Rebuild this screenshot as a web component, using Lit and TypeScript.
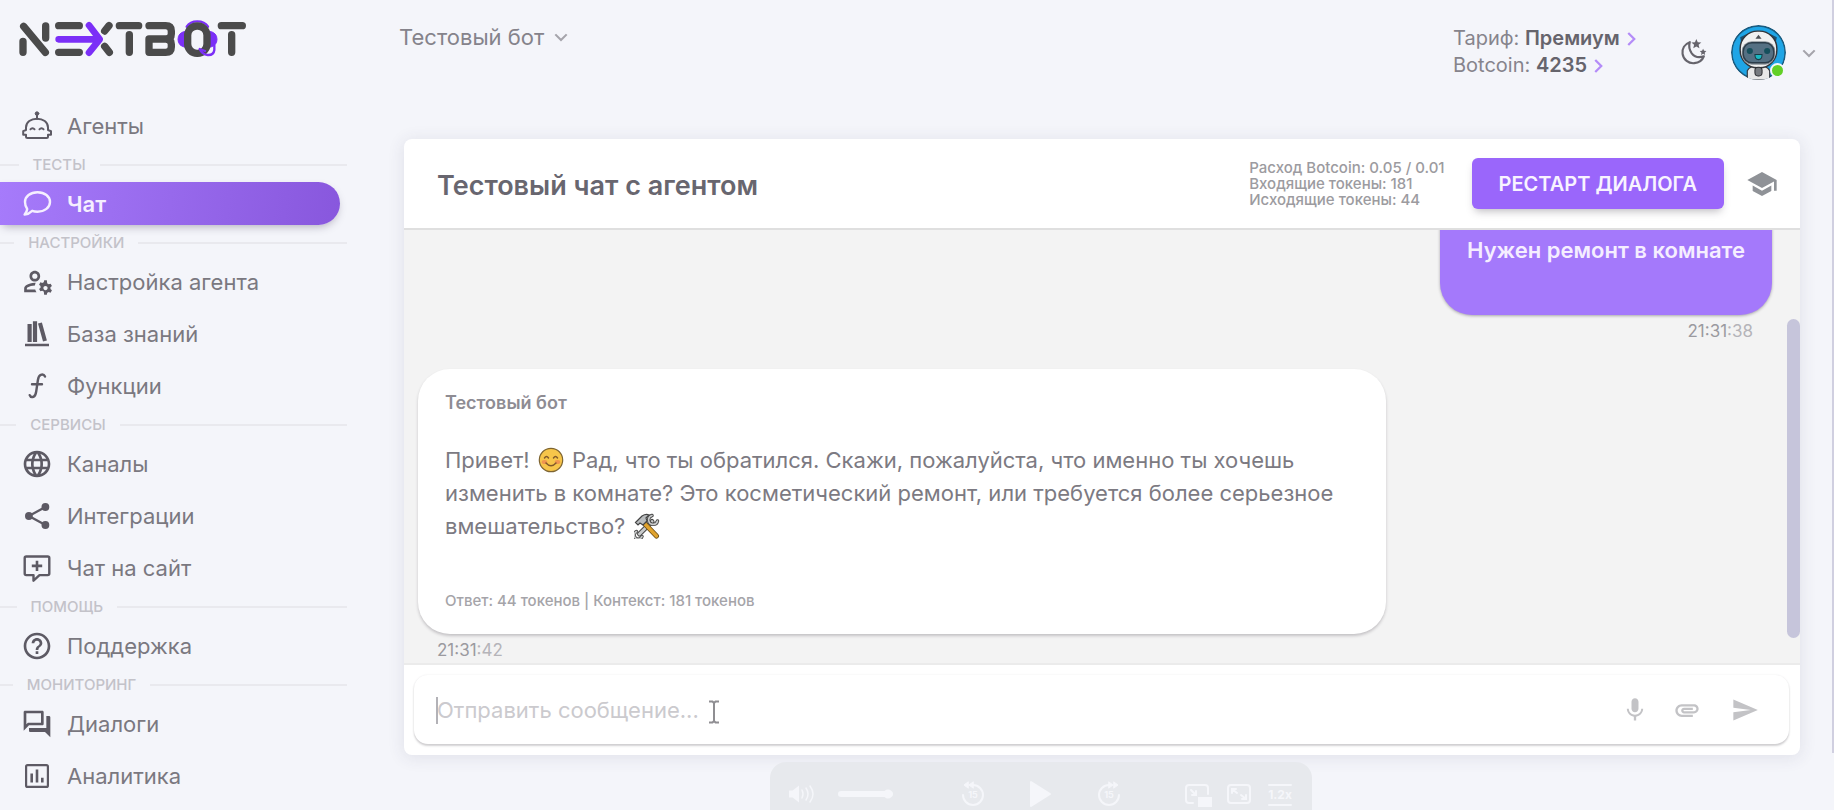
import { LitElement, html, svg, css } from "lit";
import { customElement, property } from "lit/decorators.js";

const m = (d: string) => svg`<path transform="scale(1.3333)" fill="currentColor" d=${d}></path>`;

const ICONS: Record<string, unknown> = {
  agents: svg`<g fill="none" stroke="currentColor" stroke-width="2" stroke-linejoin="round" stroke-linecap="round">
    <circle cx="16" cy="3.6" r="1.8" fill="currentColor" stroke-width="1"></circle>
    <path d="M16 4v5"></path>
    <path d="M5 20v-2.5C5 12 10 8.7 16 8.7s11 3.3 11 8.8V20l3 1.2v3.6h-3v1.7a1.5 1.5 0 0 1-1.5 1.5h-19A1.5 1.5 0 0 1 5 26.500v-1.7H2.200v-3.6z"></path>
    <path d="M9.500 19.300c1-1.500 3-1.500 4 0M18.500 19.300c1-1.500 3-1.500 4 0"></path></g>`,
  chat: svg`<path fill="none" stroke="currentColor" stroke-width="2.400" stroke-linejoin="round" d="M16.500 4.200C23.700 4.200 29 8.500 29 14s-5.300 9.700-12.500 9.700c-1.900 0-3.700-.3-5.300-.9C9.300 24.600 6.800 26.400 3.600 26.600c1.500-1.600 2.400-3.700 2.600-5.600C4.700 19.100 4 16.700 4 14c0-5.500 5.300-9.800 12.500-9.800z"></path>`,
  account: svg`<g transform="translate(.5 -.5)">${m("M4 18v-.65c0-.34.16-.66.41-.81C6.1 15.53 8.030 15 10 15c.03 0 .05 0 .08.010.1-.7.3-1.370.59-1.980-.22-.02-.44-.03-.67-.03-2.420 0-4.680.67-6.610 1.820-.88.52-1.390 1.500-1.390 2.530V20h9.260c-.42-.6-.75-1.280-.97-2H4zM10 12c2.210 0 4-1.790 4-4s-1.790-4-4-4-4 1.790-4 4 1.790 4 4 4zm0-6c1.100 0 2 .9 2 2s-.9 2-2 2-2-.9-2-2 .9-2 2-2zM21.750 17c0-.22-.03-.42-.06-.63l1.140-1.010-1-1.730-1.450.49c-.32-.27-.68-.48-1.080-.63L19 11h-2l-.3 1.490c-.4.15-.76.36-1.080.63l-1.450-.49-1 1.730 1.140 1.010c-.03.21-.06.41-.06.63s.03.42.06.63l-1.140 1.010 1 1.730 1.450-.49c.32.27.68.48 1.080.63L17 22h2l.3-1.490c.4-.15.76-.36 1.080-.63l1.450.49 1-1.730-1.140-1.010c.03-.21.06-.41.06-.63zM18 18.500c-.9 0-1.600-.7-1.600-1.600s.7-1.600 1.600-1.600 1.600.7 1.600 1.600-.7 1.600-1.600 1.600z")}</g>`,
  books: svg`<g fill="currentColor"><path d="M6.500 6h4.200v18H6.500zM11.900 3.300h4.200V24h-4.200zM17 5.600l3.900-1 5 17.900-3.900 1.100zM4 25.800h24v2.400H4z"></path></g>`,
  fn: svg`<path fill="none" stroke="currentColor" stroke-width="2.400" stroke-linecap="round" d="M24 6.600c-.8-1.700-2.600-2.300-4.200-1.700-2 .7-2.500 2.700-2.900 5.100l-1.700 11.500c-.4 2.700-1 4.600-2.800 5.300-1.600.5-3.200-.1-3.700-1.600M11 14.200h10"></path>`,
  globe: m("M11.990 2C6.470 2 2 6.480 2 12s4.470 10 9.990 10C17.520 22 22 17.520 22 12S17.520 2 11.990 2zm6.930 6h-2.950c-.32-1.250-.78-2.450-1.380-3.560 1.840.63 3.370 1.910 4.330 3.560zM12 4.040c.83 1.200 1.480 2.530 1.910 3.960h-3.820c.43-1.430 1.080-2.760 1.910-3.960zM4.260 14C4.100 13.360 4 12.690 4 12s.1-1.360.26-2h3.380c-.08.66-.14 1.320-.14 2 0 .68.06 1.340.14 2H4.260zm.82 2h2.950c.32 1.250.78 2.450 1.380 3.560-1.840-.63-3.370-1.900-4.330-3.560zm2.950-8H5.080c.96-1.660 2.490-2.930 4.330-3.560C8.810 5.550 8.350 6.750 8.030 8zM12 19.960c-.83-1.200-1.480-2.530-1.910-3.960h3.820c-.43 1.430-1.080 2.760-1.910 3.960zM14.340 14H9.660c-.09-.66-.16-1.320-.16-2 0-.68.07-1.350.16-2h4.680c.09.65.16 1.320.16 2 0 .68-.07 1.340-.16 2zm.25 5.560c.6-1.110 1.060-2.310 1.380-3.560h2.950c-.96 1.650-2.490 2.930-4.330 3.560zM16.360 14c.08-.66.14-1.320.14-2 0-.68-.06-1.340-.14-2h3.380c.16.64.26 1.310.26 2s-.1 1.360-.26 2h-3.380z"),
  share: svg`<g fill="currentColor"><circle cx="24.400" cy="7" r="3.900"></circle><circle cx="7.900" cy="16" r="3.900"></circle><circle cx="24.400" cy="25" r="3.900"></circle><path fill="none" stroke="currentColor" stroke-width="2.300" d="M24.400 7 7.900 16l16.500 9"></path></g>`,
  widget: svg`<g fill="none" stroke="currentColor" stroke-width="2.400" stroke-linejoin="round"><path d="M5.300 4.500h21.400c.9 0 1.600.7 1.600 1.600v15.400c0 .9-.7 1.600-1.600 1.600h-8.200l-6 5.600v-5.600H5.300c-.9 0-1.600-.7-1.600-1.600V6.100c0-.9.7-1.600 1.600-1.600z"></path><path d="M16 8.700v10.400M10.800 13.900h10.400" stroke-width="2.600"></path></g>`,
  help: m("M11 18h2v-2h-2v2zm1-16C6.480 2 2 6.480 2 12s4.480 10 10 10 10-4.480 10-10S17.520 2 12 2zm0 18c-4.410 0-8-3.590-8-8s3.590-8 8-8 8 3.590 8 8-3.590 8-8 8zm0-14c-2.210 0-4 1.790-4 4h2c0-1.100.9-2 2-2s2 .9 2 2c0 2-3 1.750-3 5h2c0-2.250 3-2.500 3-5 0-2.210-1.790-4-4-4z"),
  dialogs: m("M15 4v7H5.170L4 12.170V4h11m1-2H3c-.55 0-1 .45-1 1v14l4-4h10c.55 0 1-.45 1-1V3c0-.55-.45-1-1-1zm5 4h-2v9H6v2c0 .55.45 1 1 1h11l4 4V7c0-.55-.45-1-1-1z"),
  stats: svg`<g fill="none" stroke="currentColor" stroke-width="2.200"><rect x="5.100" y="5.100" width="21.800" height="21.800" rx="1.500"></rect><path stroke-width="2.600" d="M10.700 13.500v9M16 9.500v13M21.300 17.800v4.700"></path></g>`,
  school: m("M5 13.180v4L12 21l7-3.820v-4L12 17l-7-3.820zM12 3L1 9l11 6 9-4.910V17h2V9L12 3z"),
  mic: m("M12 14c1.660 0 2.990-1.340 2.990-3L15 5c0-1.660-1.340-3-3-3S9 3.340 9 5v6c0 1.660 1.340 3 3 3zm5.300-3c0 3-2.540 5.100-5.300 5.100S6.700 14 6.700 11H5c0 3.410 2.720 6.230 6 6.720V21h2v-3.280c3.280-.48 6-3.300 6-6.720h-1.700z"),
  clip: m("M2 12.500C2 9.460 4.460 7 7.500 7H18c2.210 0 4 1.790 4 4s-1.790 4-4 4H9.500C8.120 15 7 13.880 7 12.500S8.120 10 9.500 10H17v2H9.410c-.55 0-.55 1 0 1H18c1.100 0 2-.9 2-2s-.9-2-2-2H7.500C5.570 9 4 10.570 4 12.500S5.570 16 7.500 16H17v2H7.500C4.460 18 2 15.540 2 12.500z"),
  send: m("M2.010 21L23 12 2.010 3 2 10l15 2-15 2z"),
  moon: svg`<path fill="none" stroke="currentColor" stroke-width="2.300" stroke-linejoin="round" d="M11.500 5.500C6 7.500 3 12.500 3.800 18c.9 6.300 6.400 10.500 12.500 9.900 4.600-.4 8.600-3.200 10.200-7.300-5.500 2-10.200.3-12.900-3.200-2.700-3.700-3.400-7.500-2.100-11.900z"></path>
    <path fill="currentColor" d="m18.500 2 1.500 3.500 3.800.3-2.900 2.500.9 3.700-3.300-2-3.300 2 .9-3.700-2.900-2.500 3.800-.3zM25.700 12.500l1.100 2.200 2.400.3-1.800 1.700.5 2.400-2.200-1.200-2.200 1.200.5-2.400-1.800-1.700 2.400-.3z"></path>`,
  down: svg`<path fill="none" stroke="currentColor" stroke-width="2.400" d="m9.500 13 6.500 6.500 6.500-6.500"></path>`,
  right: svg`<path fill="none" stroke="currentColor" stroke-width="3" d="m11 8 8 8-8 8"></path>`,
};

@customElement("ui-icon")
export class UiIcon extends LitElement {
  @property() name = "";
  static styles = css`
    :host { display: inline-flex; flex: none; width: 32px; height: 32px; }
    .glyph { width: 100%; height: 100%; display: block; }
  `;
  render() {
    return html`<svg class="glyph" viewBox="0 0 32 32" aria-hidden="true">${ICONS[this.name]}</svg>`;
  }
}

type Entry = { icon: string; label: string; active?: boolean } | { section: string };

const NAV: Entry[] = [
  { icon: "agents", label: "Агенты" },
  { section: "ТЕСТЫ" },
  { icon: "chat", label: "Чат", active: true },
  { section: "НАСТРОЙКИ" },
  { icon: "account", label: "Настройка агента" },
  { icon: "books", label: "База знаний" },
  { icon: "fn", label: "Функции" },
  { section: "СЕРВИСЫ" },
  { icon: "globe", label: "Каналы" },
  { icon: "share", label: "Интеграции" },
  { icon: "widget", label: "Чат на сайт" },
  { section: "ПОМОЩЬ" },
  { icon: "help", label: "Поддержка" },
  { section: "МОНИТОРИНГ" },
  { icon: "dialogs", label: "Диалоги" },
  { icon: "stats", label: "Аналитика" },
];

@customElement("side-nav")
export class SideNav extends LitElement {
  static styles = css`
    :host { display: block; width: 347px; flex: none; }
    .logo { display: block; width: 228px; height: 38px; margin: 19px 0 47px 19px; }
    .list { display: flex; flex-direction: column; gap: 9px; }
    .item {
      display: flex; align-items: center; gap: 14px; height: 43px; margin-right: 7px;
      padding-left: 21px; color: #7a7880; font-size: 22px; text-decoration: none;
      border-radius: 0 22px 22px 0;
    }
    .item ui-icon { color: #5d5a64; }
    .active {
      color: #f5efff; font-weight: 600;
      background: linear-gradient(98deg, #a67bfb, #8857dd);
      box-shadow: 0 4px 10px -3px rgba(60, 50, 80, 0.4);
    }
    .active ui-icon { color: #f5efff; }
    .section {
      display: flex; align-items: center; gap: 14px; height: 17px; margin-left: -9px;
      color: #c3c2c9; font-size: 15px; line-height: 17px; font-weight: 500;
    }
    .section::before, .section::after { content: ""; height: 2px; background: #e9e9ee; }
    .section::before { flex: 1; }
    .section::after { flex: 9; }
  `;
  render() {
    return html`
      <svg class="logo" viewBox="57 55 684 114" role="img" aria-label="NEXTBOT">
        <g fill="none" stroke-linecap="round" stroke-linejoin="round" stroke-width="22" stroke="#4b4b4b">
          <path d="M69 122v33M71 77l65 78M137 76v36M176 75h62M176 155h62M327 75l-13 16M314 137l14 18M358 75h58M388 102v53M664 75h63M695 102v53"></path>
          <path d="M447 75h50q17 0 17 16v8q0 16-17 16h-50v40h50q17 0 17-16v-8q0-16-17-16"></path>
          <g stroke="#7b2ff7" fill="#7b2ff7" stroke-width="3">
            <path d="M556 92q-22 4-22 24t22 24zM629 92q22 4 22 24t-22 24z"></path>
            <path fill="none" stroke-width="7" d="M560 78q10-16 32-16t32 16"></path>
          </g>
          <rect x="563" y="76" width="58" height="82" rx="28"></rect>
          <path stroke="#7b2ff7" stroke-width="7" d="M643 134v14q-2 16-20 15-16-1-24-18l16 6"></path>
          <path stroke="#7b2ff7" stroke-width="20" d="M176 116h120M267 74l32 42-32 40"></path>
        </g>
      </svg>
      <nav class="list">
        ${NAV.map((e) =>
          "section" in e
            ? html`<div class="section">${e.section}</div>`
            : html`<a class="item ${e.active ? "active" : ""}" href="#"><ui-icon name=${e.icon}></ui-icon>${e.label}</a>`,
        )}
      </nav>
    `;
  }
}

@customElement("top-bar")
export class TopBar extends LitElement {
  static styles = css`
    :host { display: flex; align-items: flex-start; height: 139px; padding-right: 16px; box-sizing: border-box; }
    button { border: 0; padding: 0; background: none; font: inherit; color: inherit; display: flex; align-items: center; }
    .bot { margin: 21px auto 0 -5px; height: 32px; gap: 3px; font-size: 22px; color: #85838b; }
    .chev { width: 28px; height: 28px; color: #a5a4ab; }
    .plan { margin-top: 25px; font-size: 20px; line-height: 27px; color: #86848c; width: 190px; }
    .row { display: flex; align-items: center; white-space: pre; }
    .row b { font-weight: 600; color: #66646c; }
    .row a { display: flex; color: #b48cf8; }
    .arrow { width: 24px; height: 24px; }
    .theme { margin: 36px 22px 0 36px; color: #66646c; }
    .theme ui-icon { width: 30px; height: 32px; }
    .user { margin-top: 25px; gap: 9px; }
    .face { position: relative; display: block; width: 55px; height: 55px; }
    .pic { display: block; width: 55px; height: 55px; }
    .dot {
      position: absolute; right: 1px; bottom: 2px; width: 11px; height: 11px;
      border-radius: 50%; background: #62d026; border: 2px solid #f4f5fa;
    }
    .user ui-icon { width: 28px; height: 28px; color: #a5a4ab; margin-right: -5px; }
  `;
  render() {
    return html`
      <button class="bot">Тестовый бот<ui-icon class="chev" name="down"></ui-icon></button>
      <div class="plan">
        <div class="row">Тариф: <b>Премиум</b><a href="#" aria-label="Тариф"><ui-icon class="arrow" name="right"></ui-icon></a></div>
        <div class="row">Botcoin: <b>4235</b><a href="#" aria-label="Botcoin"><ui-icon class="arrow" name="right"></ui-icon></a></div>
      </div>
      <button class="theme" aria-label="Тема"><ui-icon name="moon"></ui-icon></button>
      <button class="user" aria-label="Профиль">
        <span class="face">
          <svg class="pic" viewBox="0 0 54 54" aria-hidden="true">
            <defs><clipPath id="c"><circle cx="27" cy="27" r="27"></circle></clipPath></defs>
            <g clip-path="url(#c)">
              <circle cx="27" cy="27" r="26.200" fill="#1fa5e6" stroke="#1b5c80" stroke-width="1.600"></circle>
              <path d="M16 54V45q2-5 11-5t11 5v9z" fill="#e8e8e8" stroke="#3a3d42" stroke-width="1.200"></path>
              <path d="M10 17l-1-5 6-3 24 0 6 3-1 5z" fill="#1b4f70"></path>
              <rect x="9" y="6" width="36" height="36" rx="17" fill="#f0f0f0" stroke="#33363b" stroke-width="1.400"></rect>
              <path d="M24 13.500l3-4 3 4z" fill="#4c4f55"></path>
              <rect x="10.500" y="16" width="33" height="23" rx="10" fill="#8d949b"></rect>
              <rect x="12" y="17.500" width="30" height="19.500" rx="8.500" fill="#557083" stroke="#2c3d4a" stroke-width="1.400"></rect>
              <circle cx="18.500" cy="25.500" r="3" fill="#164f5c"></circle><circle cx="35.500" cy="25.500" r="3" fill="#164f5c"></circle>
              <path d="M23.500 29h7q0 5-3.500 5t-3.500-5z" fill="#19b7c0" stroke="#173d48"></path>
              <rect x="23.500" y="41.500" width="7" height="8.500" rx="3" fill="#777b80" stroke="#2d2f33"></rect>
            </g>
          </svg>
          <span class="dot"></span>
        </span>
        <ui-icon name="down"></ui-icon>
      </button>
    `;
  }
}

@customElement("chat-card")
export class ChatCard extends LitElement {
  static styles = css`
    :host {
      display: flex; flex-direction: column; flex: 1; min-height: 0; background: #fff;
      border-radius: 8px; overflow: hidden; box-shadow: 0 2px 16px 2px rgba(58, 53, 85, 0.09);
    }
    button { border: 0; padding: 0; background: none; font: inherit; color: inherit; display: flex; }
    .head {
      display: flex; align-items: center; height: 89px; padding: 0 22px 0 33px;
      border-bottom: 2px solid #dfdfdf; flex: none;
    }
    .title { margin: 4px auto 0 0; font-size: 27px; font-weight: 600; color: #68666f; }
    .usage { font-size: 15px; line-height: 16px; font-weight: 500; color: #9c9ba0; margin-right: 27px; }
    .usage div { white-space: nowrap; }
    .head .restart {
      height: 51px; padding: 0 27px; align-items: center; border-radius: 6px; background: #9a66fb;
      color: #f8f3ff; font-size: 20px; font-weight: 600; margin-right: 22px;
      box-shadow: 0 5px 9px -3px rgba(58, 53, 65, 0.35);
    }
    .school { color: #8f9297; }
    .feed {
      position: relative; flex: 1; min-height: 0; overflow: hidden; background: #f3f3f3;
      display: flex; flex-direction: column; justify-content: flex-end;
      padding: 0 28px 0 14px; border-bottom: 2px solid #ebebeb;
    }
    .msg { display: flex; flex-direction: column; flex: none; }
    .mine { align-items: flex-end; margin-bottom: 25px; }
    .bot { align-items: flex-start; }
    .bubble { box-sizing: border-box; border-radius: 32px; padding: 22px 27px; font-size: 22px; line-height: 33px; }
    .mine .bubble { background: #a479fb; color: #f5eeff; font-weight: 600; padding-top: 48px; padding-bottom: 48px; box-shadow: 0 1px 3px rgba(58, 53, 65, 0.4); }
    .bot .bubble { max-width: 968px; background: #fff; color: #7c7a82; box-shadow: 0 2px 3px rgba(58, 53, 65, 0.25); }
    .name { font-size: 18px; line-height: 24px; font-weight: 600; color: #8e8c93; margin-bottom: 29px; }
    .text { margin: 0; }
    .emoji { width: 26px; height: 26px; margin: 0 2px; vertical-align: -5px; }
    .foot { margin-top: 47px; font-size: 15px; line-height: 22px; font-weight: 500; color: #a5a4a9; }
    .time { font-size: 17px; line-height: 26px; padding: 3px 19px 0; color: #9b9a9f; }
    .sec { color: #b5b4b9; }
    .thumb { position: absolute; right: 0; top: 89px; width: 13px; height: 319px; border-radius: 7px; background: #c6c5db; }
    .compose { flex: none; padding: 10px 11px 11px 10px; }
    .field {
      position: relative; display: flex; align-items: center; height: 69px; box-sizing: border-box;
      padding: 0 30px 0 23px; border-radius: 14px; background: #fff;
      box-shadow: 0 2px 2px rgba(58, 53, 65, 0.22), 0 0 2px rgba(58, 53, 65, 0.1); color: #c3c3c6;
    }
    .field button + button { margin-left: 24px; }
    .field .send { margin-left: 30px; }
    .input { flex: 1; min-width: 0; border: 0; outline: 0; padding: 0; background: none; font: inherit; font-size: 22px; color: #7c7a82; }
    .input::placeholder { color: #cbcace; opacity: 1; }
    .field ui-icon { width: 28px; height: 28px; }
    .caret { position: absolute; left: 22px; top: 22px; width: 2px; height: 27px; background: #b3b2b7; }
    .pointer { position: absolute; left: 294px; top: 25px; width: 12px; height: 24px; }
  `;
  render() {
    return html`
      <header class="head">
        <h1 class="title">Тестовый чат с агентом</h1>
        <div class="usage">
          <div>Расход Botcoin: 0.05 / 0.01</div>
          <div>Входящие токены: 181</div>
          <div>Исходящие токены: 44</div>
        </div>
        <button class="restart">РЕСТАРТ ДИАЛОГА</button>
        <button class="school" aria-label="Обучение"><ui-icon name="school"></ui-icon></button>
      </header>
      <div class="feed">
        <div class="msg mine">
          <div class="bubble">Нужен ремонт в комнате</div>
          <div class="time">21:31<span class="sec">:38</span></div>
        </div>
        <div class="msg bot">
          <div class="bubble">
            <div class="name">Тестовый бот</div>
            <p class="text">Привет! <svg class="emoji" viewBox="0 0 26 26" aria-hidden="true">
              <circle cx="13" cy="13" r="11.700" fill="#f6c54a" stroke="#7d6432" stroke-width="1.200"></circle>
              <ellipse cx="6.500" cy="15" rx="2.800" ry="2" fill="#f0954f"></ellipse><ellipse cx="19.500" cy="15" rx="2.800" ry="2" fill="#f0954f"></ellipse>
              <path d="M6.500 11q2-3 4 0M15.500 11q2-3 4 0M8 16q5 5.500 10 0" fill="none" stroke="#80592a" stroke-width="1.500" stroke-linecap="round"></path>
            </svg> Рад, что ты обратился. Скажи, пожалуйста, что именно ты хочешь изменить в комнате? Это косметический ремонт, или требуется более серьезное вмешательство? <svg class="emoji" viewBox="0 0 26 26" aria-hidden="true">
              <g fill="none" stroke-linecap="round">
                <path d="M5.500 21 18 8.500" stroke="#4a4a4a" stroke-width="5"></path>
                <path d="M5.500 21 18 8.500" stroke="#c9cbcc" stroke-width="3"></path>
                <path d="M18 2.500a4.500 4.500 0 1 0 5.500 5.500M2.500 18.500a4 4 0 1 0 5.500 5" stroke="#4a4a4a" stroke-width="3.400"></path>
                <path d="M18 2.500a4.500 4.500 0 1 0 5.500 5.500M2.500 18.500a4 4 0 1 0 5.500 5" stroke="#c9cbcc" stroke-width="1.600"></path>
                <path d="m10 10 12.500 13" stroke="#6b4d17" stroke-width="5"></path>
                <path d="m10 10 12.500 13" stroke="#e0a32e" stroke-width="3.400"></path>
              </g>
              <path d="M1.500 9.500 8 3q4-2.500 7-1l-3 3 1 3-4 4-3-2-2 2z" fill="#b9bcbe" stroke="#444" stroke-width="1.200"></path>
            </svg></p>
            <div class="foot">Ответ: 44 токенов | Контекст: 181 токенов</div>
          </div>
          <div class="time">21:31<span class="sec">:42</span></div>
        </div>
        <span class="thumb"></span>
      </div>
      <div class="compose">
        <div class="field">
          <input class="input" type="text" aria-label="Сообщение" placeholder="Отправить сообщение..." />
          <button aria-label="Голос"><ui-icon name="mic"></ui-icon></button>
          <button aria-label="Файл"><ui-icon name="clip"></ui-icon></button>
          <button class="send" aria-label="Отправить"><ui-icon name="send"></ui-icon></button>
          <span class="caret"></span>
          <svg class="pointer" viewBox="0 0 12 24" aria-hidden="true"><path d="M1 1.500h3.500L6 3l1.500-1.500H11M6 3v18M1 22.500h3.500L6 21l1.500 1.500H11" fill="none" stroke="#8f8e92" stroke-width="2"></path></svg>
        </div>
      </div>
    `;
  }
}

@customElement("media-bar")
export class MediaBar extends LitElement {
  static styles = css`
    :host {
      position: absolute; left: 42%; bottom: 0; width: 542px; height: 48px; box-sizing: border-box;
      overflow: hidden; border-radius: 16px 16px 0 0; background: #e7e9ed;
    }
    .art { display: block; width: 542px; height: 48px; color: #f5f6fa; }
    .num { font: 700 9px Inter, sans-serif; fill: currentColor; text-anchor: middle; }
    .rate { font: 700 12px Inter, sans-serif; fill: currentColor; text-anchor: middle; }
  `;
  render() {
    return html`<svg class="art" viewBox="0 0 542 48" aria-hidden="true">
      <g fill="none" stroke="currentColor" stroke-width="2" stroke-linecap="round">
        <path fill="currentColor" d="M20 29.500h3l5-4v13l-5-4h-3z"></path>
        <path d="M32 28q2 4 0 8M36 26q4 6 0 12M40 24q6 8 0 16" stroke-width="1.500"></path>
        <path d="M71 32h49" stroke-width="6"></path><circle cx="118" cy="32" r="3.500" fill="currentColor"></circle>
        <path d="M203 23a10 10 0 1 1-10 10M339 23a10 10 0 1 0 10 10"></path>
        <path fill="currentColor" stroke-width="1" d="M203 20l-4 3 4 3zM198 20l-4 3 4 3zM339 20l4 3-4 3zM344 20l4 3-4 3z"></path>
        <path fill="currentColor" stroke-linejoin="round" d="M261 20v24l19-12z"></path>
        <path d="M423 41h-4q-3 0-3-3V26q0-3 3-3h16q3 0 3 3v6M421 28l5 5m0-4v4h-4"></path>
        <rect x="429" y="36" width="12" height="8" fill="currentColor"></rect>
        <rect x="458" y="23" width="22" height="18" rx="3"></rect>
        <path d="m462 27 5 4m-5 0v-4h4M476 37l-5-4m5 0v4h-4M499 23h22M499 43h22"></path>
      </g>
      <text class="num" x="203" y="36">15</text><text class="num" x="339" y="36">15</text>
      <text class="rate" x="510" y="37">1.2x</text>
    </svg>`;
  }
}

@customElement("app-root")
export class AppRoot extends LitElement {
  static styles = css`
    :host {
      position: relative; display: flex; gap: 57px; height: 100vh; overflow: hidden;
      background: #f4f5fa; font-family: Inter, "Noto Sans", sans-serif;
    }
    .main { flex: 1; min-width: 0; display: flex; flex-direction: column; padding-bottom: 55px; }
    .main chat-card { margin-right: 34px; }
    .edge { position: absolute; right: 0; top: 0; width: 2px; height: 753px; background: #d0cfe0; }
  `;
  render() {
    return html`
      <side-nav></side-nav>
      <main class="main">
        <top-bar></top-bar>
        <chat-card></chat-card>
      </main>
      <media-bar></media-bar>
      <span class="edge"></span>
    `;
  }
}
